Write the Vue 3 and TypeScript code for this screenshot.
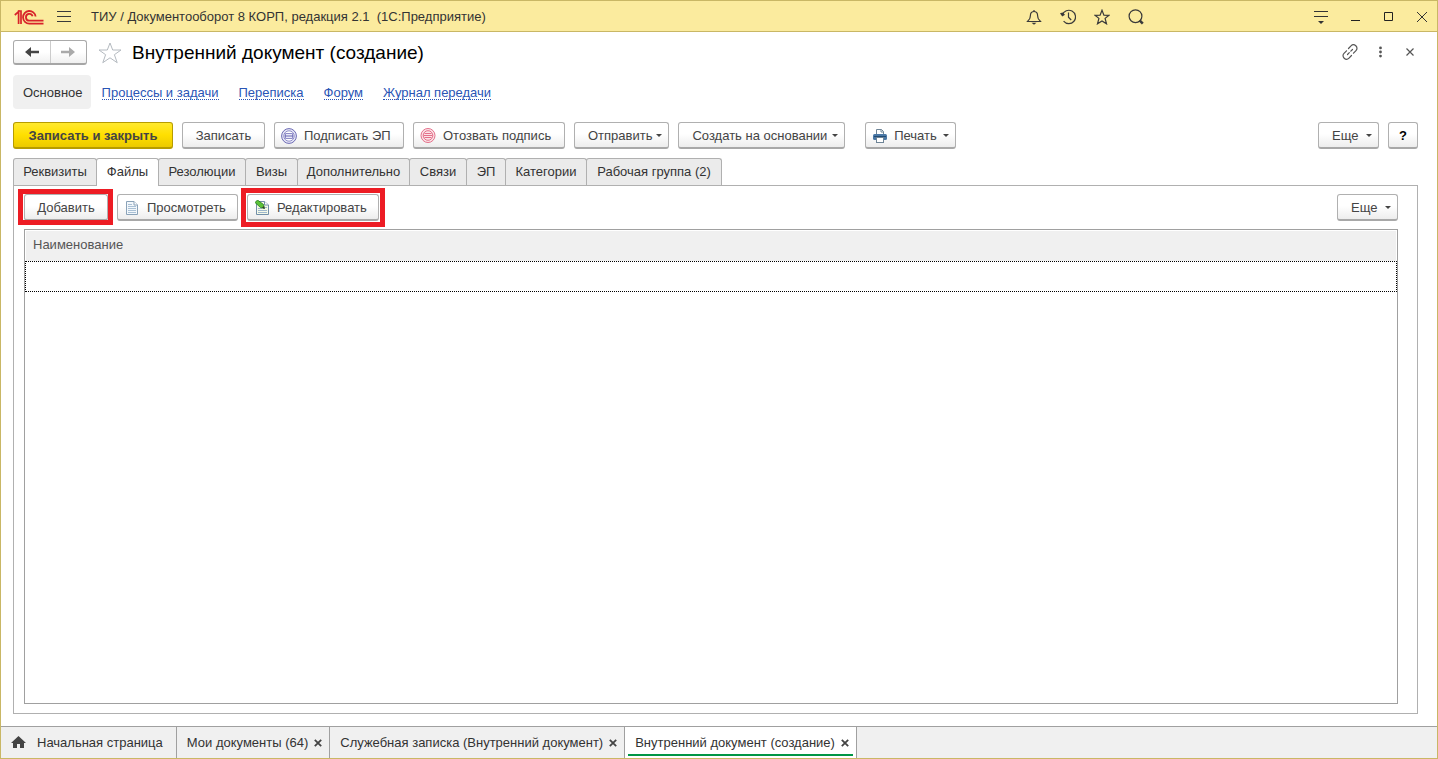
<script setup lang="ts">
import { ref } from 'vue'

interface WindowTab {
  title: string
  home?: boolean
}

const sections: string[] = ['Процессы и задачи', 'Переписка', 'Форум', 'Журнал передачи']
const pages: string[] = [
  'Реквизиты',
  'Файлы',
  'Резолюции',
  'Визы',
  'Дополнительно',
  'Связи',
  'ЭП',
  'Категории',
  'Рабочая группа (2)',
]
const pageWidths: number[] = [84, 63, 88, 53, 113, 58, 40, 82, 136]
const activePage = ref(1)

const windows: WindowTab[] = [
  { title: 'Начальная страница', home: true },
  { title: 'Мои документы (64)' },
  { title: 'Служебная записка (Внутренний документ)' },
  { title: 'Внутренний документ (создание)' },
]
const activeWindow = ref(3)
</script>

<template>
  <div class="app">
    <header class="titlebar">
      <svg class="logo" width="30" height="15" viewBox="0 0 30 15" fill="none" stroke="#d8232a">
        <path d="M.8 5L4.600 1.700V14" stroke-width="1.700" />
        <path d="M3.800 1H7V14" stroke-width="1.700" />
        <path d="M21.600 6.500A6.300 6.300 0 1 0 15.300 13.600H29.500" stroke-width="1.800" />
        <path d="M18.600 6.300A3.400 3.400 0 1 0 15.300 10.700H29.500" stroke-width="1.800" />
      </svg>
      <button class="icon-btn menu" aria-label="Меню">
        <svg width="14" height="12" viewBox="0 0 14 12" stroke="#3a3a3a"><path d="M0 .5H14M0 5.500H14M0 10.500H14" /></svg>
      </button>
      <span class="app-name">ТИУ / Документооборот 8 КОРП, редакция 2.1&nbsp; (1С:Предприятие)</span>
      <div class="tools">
        <button class="icon-btn" aria-label="Уведомления">
          <svg width="16" height="16" viewBox="0 0 16 16" fill="none" stroke="#3a3a3a" stroke-width="1.200">
            <path d="M1.500 12.500H14.500L12.500 10C11.500 8.500 11.800 6.500 11.300 4.600C10.900 3.200 9.700 2.500 8 2.500S5.100 3.200 4.700 4.600C4.200 6.500 4.500 8.500 3.500 10Z" />
            <path d="M8 1V2.500" /><path d="M5.500 13.800H10.500L8 15.800Z" fill="#3a3a3a" stroke="none" />
          </svg>
        </button>
        <button class="icon-btn" aria-label="История">
          <svg width="16" height="16" viewBox="0 0 16 16" fill="none" stroke="#3a3a3a" stroke-width="1.200">
            <path d="M2.400 6A6.700 6.700 0 1 1 3.600 12.200" /><path d="M8.500 3.500V8.200L11.200 11" />
            <path d="M0 4.200L2.600 3.600L5 5.800L2.200 7.400Z" fill="#3a3a3a" stroke="none" />
          </svg>
        </button>
        <button class="icon-btn" aria-label="Избранное">
          <svg width="16" height="16" viewBox="0 0 16 16" fill="none" stroke="#3a3a3a" stroke-width="1.200">
            <path d="M8 1.200L9.900 6.100L15 6.300L11.100 9.400L12.500 14.800L8 11.900L3.500 14.800L4.900 9.400L1 6.300L6.100 6.100Z" />
          </svg>
        </button>
        <button class="icon-btn" aria-label="Поиск">
          <svg width="16" height="16" viewBox="0 0 16 16" fill="none" stroke="#3a3a3a">
            <circle cx="7.500" cy="7.200" r="6.400" stroke-width="1.200" /><path d="M11.600 11.400L14.800 14.600" stroke-width="2.600" />
          </svg>
        </button>
      </div>
      <div class="window-controls">
        <button class="icon-btn" aria-label="Настройка">
          <svg width="14" height="14" viewBox="0 0 14 14" stroke="#333"><path d="M0 1.500H14M0 6.500H14" /><path d="M4 11H10L7 14Z" fill="#333" stroke="none" /></svg>
        </button>
        <button class="icon-btn" aria-label="Свернуть">
          <svg width="10" height="10" viewBox="0 0 10 10" stroke="#222"><path d="M0 8.500H9" /></svg>
        </button>
        <button class="icon-btn" aria-label="Развернуть">
          <svg width="10" height="10" viewBox="0 0 10 10" fill="none" stroke="#222"><path d="M.5 .5H8.500V8.500H.5Z" /></svg>
        </button>
        <button class="icon-btn" aria-label="Закрыть">
          <svg width="10" height="10" viewBox="0 0 10 10" stroke="#333"><path d="M0 0L10 10M10 0L0 10" /></svg>
        </button>
      </div>
    </header>

    <main class="form">
      <div class="heading">
        <div class="history">
          <button aria-label="Назад">
            <svg width="14" height="10" viewBox="0 0 14 10"><path d="M0 5L6 0V3.800H14V6.200H6V10Z" fill="#444" /></svg>
          </button>
          <button aria-label="Вперед">
            <svg width="14" height="10" viewBox="0 0 14 10"><path d="M14 5L8 0V3.800H0V6.200H8V10Z" fill="#aaa" /></svg>
          </button>
        </div>
        <button class="icon-btn star" aria-label="Добавить в избранное">
          <svg width="24" height="22" viewBox="0 0 24 22" fill="none" stroke="#b4bac0">
            <path d="M12 1L14.700 8H23L16.400 12.700L19.200 20.700L12 15.800L4.800 20.700L7.600 12.700L1 8H9.300Z" />
          </svg>
        </button>
        <h1>Внутренний документ (создание)</h1>
        <div class="form-tools">
          <button class="icon-btn" aria-label="Получить ссылку">
            <svg width="16" height="16" viewBox="0 0 16 16" fill="none" stroke="#555" stroke-width="1.200" stroke-linecap="round">
              <path d="M6.500 4.500L9 1.800C10.300 .5 12.400 .5 13.800 1.800C15.300 3.200 15.400 5.200 14 6.600L11.500 9.200" />
              <path d="M9.500 11.500L7 14.100C5.700 15.400 3.600 15.500 2.200 14.200C.7 12.800 .6 10.800 2 9.400L4.500 6.800" />
              <path d="M5.500 10.500L7.300 8.700M8.800 7.200L10.500 5.500" />
            </svg>
          </button>
          <button class="icon-btn" aria-label="Действия">
            <svg width="8" height="12" viewBox="0 0 8 12" fill="#555"><circle cx="2.500" cy="1.900" r="1.400" /><circle cx="2.500" cy="6" r="1.400" /><circle cx="2.500" cy="10.100" r="1.400" /></svg>
          </button>
          <button class="icon-btn" aria-label="Закрыть форму">
            <svg width="8" height="8" viewBox="0 0 8 8" stroke="#555" stroke-width="1.200"><path d="M.5 .5L7.500 7.500M7.500 .5L.5 7.500" /></svg>
          </button>
        </div>
      </div>

      <nav class="sections">
        <span class="current">Основное</span>
        <a v-for="s in sections" :key="s" href="#">{{ s }}</a>
      </nav>

      <div class="commands">
        <button class="btn primary">Записать и закрыть</button>
        <button class="btn w-save">Записать</button>
        <button class="btn iconed w-sign">
          <svg width="16" height="16" viewBox="0 0 16 16" fill="#e9e9f8" stroke="#6b69b3">
            <circle cx="8" cy="8" r="7.400" /><circle cx="8" cy="8" r="5.200" fill="#fff" stroke="#8e8cc8" />
            <path d="M4.500 5.500H11.500V10.500H4.500Z" fill="#e9e9f8" stroke="#8e8cc8" /><path d="M3.500 8H12.500" />
          </svg>
          <span>Подписать ЭП</span>
        </button>
        <button class="btn iconed w-revoke">
          <svg width="16" height="16" viewBox="0 0 16 16" fill="#fbe4e8" stroke="#e4708a">
            <circle cx="8" cy="7.500" r="7" /><circle cx="8" cy="7.500" r="4.800" />
            <path d="M4.500 5.500H11.500M3.500 7.500H12.500M4.500 9.500H11.500" />
          </svg>
          <span>Отозвать подпись</span>
        </button>
        <button class="btn drop w-send"><span>Отправить</span><i class="caret"></i></button>
        <button class="btn drop w-create"><span>Создать на основании</span><i class="caret"></i></button>
        <button class="btn drop w-print">
          <svg width="14" height="14" viewBox="0 0 14 14">
            <path d="M3.500 6V.5H8.500L10.500 2.500V6" fill="#fff" stroke="#6e8496" />
            <path d="M8 .5V3H10.500" fill="none" stroke="#6e8496" />
            <rect x="0" y="5" width="14" height="6" rx="1.500" fill="#4a78a6" />
            <path d="M1 7.500H13" stroke="#224b73" />
            <rect x="3.500" y="8.500" width="7" height="5" fill="#fff" stroke="#6e8496" />
          </svg>
          <span>Печать</span><i class="caret"></i>
        </button>
        <button class="btn drop w-more push"><span>Еще</span><i class="caret"></i></button>
        <button class="btn help" aria-label="Справка">?</button>
      </div>

      <div class="tabs" role="tablist">
        <button
          v-for="(p, i) in pages"
          :key="p"
          role="tab"
          :aria-selected="i === activePage"
          :class="{ active: i === activePage }"
          :style="{ minWidth: pageWidths[i] + 'px' }"
          @click="activePage = i"
        >{{ p }}</button>
      </div>

      <section class="page">
        <div class="file-commands">
          <button class="btn w-add marked">Добавить</button>
          <button class="btn iconed w-view">
            <svg width="12" height="14" viewBox="0 0 12 14">
              <path d="M.5 .5H8L11.500 4V13.500H.5Z" fill="#f2f7fb" stroke="#8aa2b8" />
              <path d="M8 .5V4H11.500" fill="#fff" stroke="#8aa2b8" />
              <path d="M2 3.500H6M2 5.500H10M2 7.500H10M2 9.500H10M2 11.500H10" stroke="#a9c0d5" />
            </svg>
            <span>Просмотреть</span>
          </button>
          <button class="btn iconed w-edit marked wide">
            <svg width="14" height="16" viewBox="0 0 14 16">
              <path d="M1.500 1.500H9.500L13.500 5V14.500H1.500Z" fill="#f5f9e8" stroke="#718ea8" />
              <path d="M9.500 1.500V5H13.500" fill="#fff" stroke="#718ea8" />
              <path d="M3 8.500H7M3 10.500H12M3 12.500H12M10 7.500H12" stroke="#9db6cc" />
              <path d="M0 2.500L2.500 0L8.500 4.500L9.500 8.500L5.500 7.500Z" fill="#5cc238" stroke="#23791a" stroke-width=".8" />
              <path d="M7 7.800L9.700 8.700L9 6Z" fill="#333" />
            </svg>
            <span>Редактировать</span>
          </button>
          <button class="btn drop w-more push"><span>Еще</span><i class="caret"></i></button>
        </div>
        <div class="list">
          <table>
            <thead><tr><th>Наименование</th></tr></thead>
            <tbody><tr><td tabindex="0"></td></tr></tbody>
          </table>
        </div>
      </section>
    </main>

    <footer class="windows">
      <div v-for="(w, i) in windows" :key="w.title" class="window" :class="{ active: i === activeWindow, home: w.home }">
        <button class="window-name" @click="activeWindow = i">
          <svg v-if="w.home" width="15" height="14" viewBox="0 0 15 14"><path d="M7.500 0L15 7H13V12H9V8H6V12H2V7H0Z" fill="#444" /></svg>
          <span>{{ w.title }}</span>
        </button>
        <button v-if="!w.home" class="icon-btn" :aria-label="'Закрыть: ' + w.title">
          <svg width="8" height="8" viewBox="0 0 8 8" stroke="#444" stroke-width="1.800"><path d="M.8 .8L7.200 7.200M7.200 .8L.8 7.200" /></svg>
        </button>
      </div>
    </footer>
  </div>
</template>

<style>
body {
  margin: 0;
}
</style>

<style scoped>
.app {
  box-sizing: border-box;
  min-height: 100vh;
  display: flex;
  flex-direction: column;
  border: 1px solid #c9b765;
  background: #fff;
  color: #333;
  font: 13px/16px "Liberation Sans", Arial, sans-serif;
}
button {
  box-sizing: border-box;
  margin: 0;
  padding: 0;
  border: 0;
  background: none;
  color: inherit;
  font: inherit;
  white-space: nowrap;
}
svg {
  display: block;
  flex: none;
}
.titlebar {
  display: flex;
  align-items: center;
  height: 28px;
  padding: 2px 10px 0 13px;
  border-bottom: 1px solid #c9b765;
  background: #fbeb9e;
}
.menu {
  margin: 0 20px 0 13px;
}
.tools {
  display: flex;
  align-items: center;
  gap: 18px;
  margin-left: auto;
}
.window-controls {
  display: flex;
  align-items: center;
  gap: 23px;
  margin-left: 170px;
}
.form {
  flex: 1;
  display: flex;
  flex-direction: column;
  padding: 8px 19px 12px 12px;
}
.heading {
  display: flex;
  align-items: center;
  height: 25px;
}
.history {
  display: flex;
  box-sizing: border-box;
  width: 74px;
  height: 25px;
  border: 1px solid #aaa;
  border-bottom: 2px solid #a6a6a6;
  border-radius: 3px;
  background: linear-gradient(#fff 50%, #f0f0f0);
}
.history button {
  flex: 1;
  display: flex;
  align-items: center;
  justify-content: center;
}
.history button + button {
  border-left: 1px solid #ccc;
}
.star {
  margin: 0 10px 0 11px;
}
h1 {
  margin: 0;
  color: #000;
  font-size: 19px;
  font-weight: 400;
  line-height: 24px;
}
.form-tools {
  display: flex;
  align-items: center;
  gap: 20px;
  margin: 0 4px 2px auto;
}
.sections {
  display: flex;
  align-items: center;
  gap: 20px;
  margin-top: 10px;
}
.current {
  margin-right: -9px;
  padding: 10px 8px 8px 10px;
  border-radius: 4px;
  background: #f0f0f0;
}
.sections a {
  margin-top: 2px;
  color: #2a55b5;
  line-height: 13px;
  text-decoration: none;
  border-bottom: 1px dotted #2a55b5;
}
.commands {
  display: flex;
  gap: 9px;
  margin-top: 13px;
}
.btn {
  display: flex;
  align-items: center;
  justify-content: center;
  height: 27px;
  padding-top: 1px;
  border: 1px solid #b0b0b0;
  border-bottom: 2px solid #a8a8a8;
  border-radius: 3px;
  background: linear-gradient(#fff 45%, #ededed);
  color: #444;
}
.primary {
  min-width: 160px;
  border-color: #b79c00;
  background: linear-gradient(#ffe92e, #ffdf00 50%, #ecca00);
  font-weight: 700;
}
.iconed {
  justify-content: flex-start;
  gap: 7px;
  padding-left: 6px;
}
.drop {
  gap: 4px;
  padding-right: 6px;
  padding-left: 13px;
  justify-content: space-between;
}
.caret {
  border: 3px solid transparent;
  border-top-color: #444;
  border-bottom: 0;
}
.w-save { min-width: 83px; }
.w-sign { min-width: 130px; }
.w-revoke { min-width: 152px; }
.w-send { min-width: 95px; }
.w-create { min-width: 167px; }
.w-print {
  min-width: 91px;
  margin-left: 11px;
  padding-left: 7px;
}
.w-more { min-width: 61px; }
.help {
  min-width: 30px;
  color: #000;
  font-weight: 700;
}
.push { margin-left: auto; }
.w-add { min-width: 84px; }
.w-view {
  min-width: 121px;
  padding-left: 8px;
  gap: 9px;
}
.w-edit {
  min-width: 132px;
  padding-left: 7px;
  gap: 8px;
}
.tabs {
  display: flex;
  margin-top: 9px;
}
.tabs button {
  height: 27px;
  margin-right: -1px;
  border: 1px solid #b0b0b0;
  border-bottom: 0;
  border-radius: 3px 3px 0 0;
  background: #ebebeb;
}
.tabs .active {
  height: 28px;
  margin-bottom: -1px;
  padding-bottom: 1px;
  background: #fff;
  z-index: 1;
}
.page {
  flex: 1;
  display: flex;
  flex-direction: column;
  padding: 8px 19px 9px 10px;
  border: 1px solid #b0b0b0;
}
.file-commands {
  display: flex;
  gap: 9px;
}
.marked {
  position: relative;
}
.marked::after {
  content: "";
  position: absolute;
  inset: -6px -6px -6px -7px;
  border: 5px solid #ed1c24;
  pointer-events: none;
}
.marked.wide::after {
  inset: -7px -7px -8px -7px;
}
.list {
  flex: 1;
  margin-top: 8px;
  border: 1px solid #a0a0a0;
}
table {
  width: 100%;
  border-collapse: separate;
  border-spacing: 0;
}
th {
  height: 31px;
  padding: 0 7px 2px;
  border: 1px solid #fff;
  border-bottom: 0;
  box-sizing: border-box;
  background: #f0f0f0;
  color: #555;
  font-weight: 400;
  text-align: left;
}
td {
  box-sizing: border-box;
  height: 31px;
  padding: 0;
  border: 1px dotted #000;
}
.windows {
  display: flex;
  height: 31px;
  border-top: 1px solid #a0a0a0;
  background: #f0f0f0;
}
.window {
  display: flex;
  align-items: center;
  gap: 6px;
  padding: 0 7px 0 10px;
  border-right: 1px solid #a0a0a0;
}
.window-name {
  display: flex;
  align-items: center;
  gap: 11px;
  height: 31px;
}
.home {
  padding-right: 13px;
}
.window.active {
  background: linear-gradient(#009646, #009646) 3px 27px / calc(100% - 6px) 2px no-repeat #fff;
}
</style>
